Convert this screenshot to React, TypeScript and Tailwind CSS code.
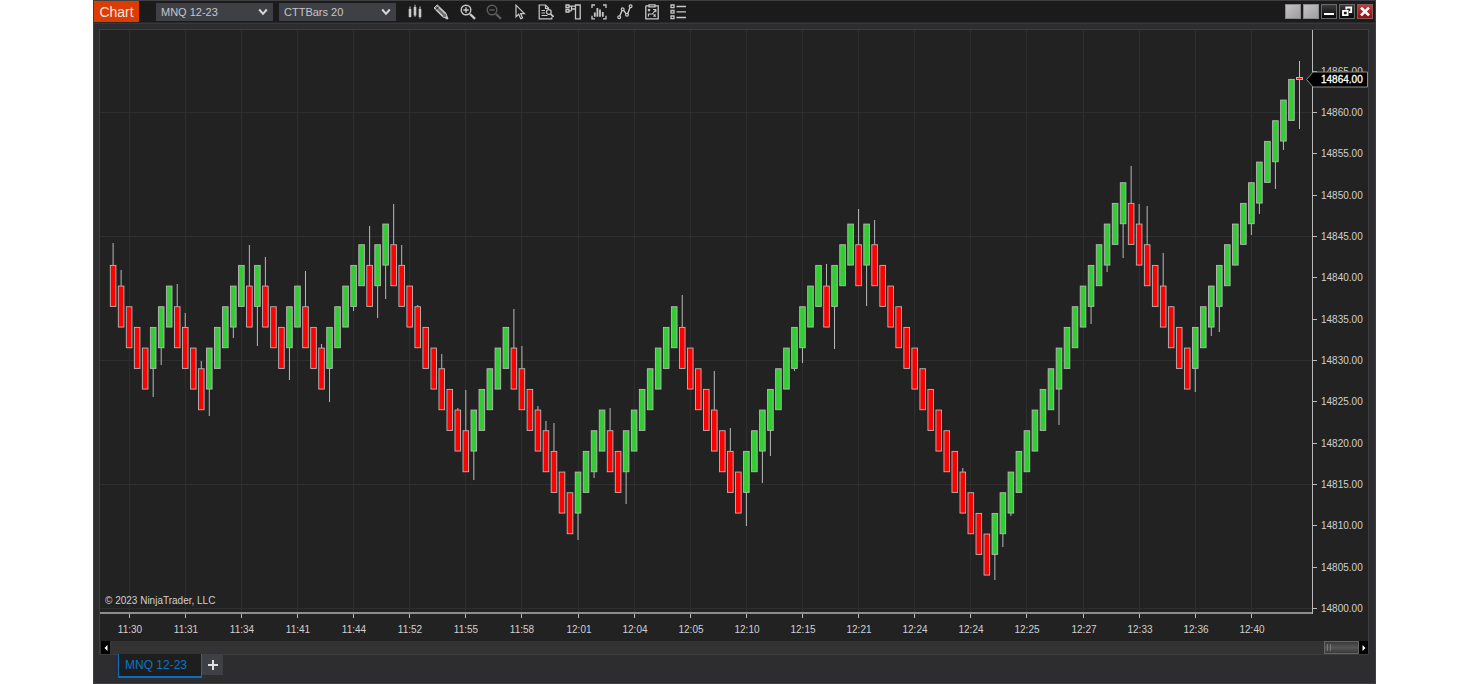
import { ReactNode, useState } from 'react';

type Candle = { up: boolean; level: number; high?: number; low?: number };

// Runs of candles in the same direction: positive is up, negative is down
const RUNS = [
  -5, 3, -4, 5, -1, 1, -3, 2, -3, 5, -1, 2, -10, 5, -8, 4, -2, 7, -8, 10, -1, 3, -1, 1, -15, 17, -8, 13,
];

// Wick ends by candle index
const HIGHS: Record<number, number> = {
  0: 213, 1: 240, 8: 254, 9: 283, 11: 331, 17: 215, 19: 227, 24: 241, 26: 314, 32: 196, 35: 174, 36: 215,
  38: 275, 41: 324, 43: 378, 44: 360, 50: 279, 51: 316, 53: 376, 54: 391, 55: 393, 62: 378, 71: 265, 75: 341,
  77: 398, 89: 234, 93: 179, 95: 190, 106: 438, 127: 136, 128: 174, 129: 176, 131: 223,
};
const LOWS: Record<number, number> = {
  5: 367, 6: 335, 12: 386, 15: 308, 18: 316, 22: 350, 27: 372, 30: 281, 33: 288, 34: 269, 45: 450, 58: 510,
  60: 448, 64: 474, 79: 496, 81: 453, 82: 426, 85: 341, 86: 333, 90: 319, 94: 276, 110: 550, 111: 517,
  112: 486, 118: 395, 122: 294, 124: 242, 126: 228, 135: 362, 137: 306, 138: 302, 142: 205, 143: 184,
  145: 159, 146: 120,
};

const TIMES = [
  '11:30', '11:31', '11:34', '11:41', '11:44', '11:52', '11:55', '11:58', '12:01', '12:04', '12:05',
  '12:10', '12:15', '12:21', '12:24', '12:24', '12:25', '12:27', '12:33', '12:36', '12:40',
];
const PRICES = Array.from({ length: 14 }, (_, i) => 14865 - i * 5);

const candleX = (i: number) => 13.1 + i * 8.016;
const priceY = (p: number) => 82.5 + (14860 - p) * 8.267;
const STEP = 20.667;

function buildCandles(): Candle[] {
  const out: Candle[] = [];
  let level = 1;
  for (const run of RUNS) {
    for (let n = 0; n < Math.abs(run); n++) {
      level += run > 0 ? 1 : -1;
      const i = out.length;
      out.push({ up: run > 0, level, high: HIGHS[i], low: LOWS[i] });
    }
  }
  return out;
}

const candles = buildCandles();

function PriceChart() {
  return (
    <svg viewBox="0 0 1268 611" className="block h-auto w-full font-['Liberation_Sans',sans-serif] text-[10px]" role="img">
      <g stroke="#2e2e2e" strokeWidth="1">
        {[14860, 14845, 14830, 14815, 14800].map((p) => (
          <line key={p} x1="0" x2="1212" y1={Math.floor(priceY(p)) + 0.5} y2={Math.floor(priceY(p)) + 0.5} />
        ))}
        {TIMES.map((_, i) => {
          const x = Math.floor(candleX(2 + i * 7)) + 0.5;
          return <line key={i} x1={x} x2={x} y1="0" y2="583" />;
        })}
      </g>

      <g stroke="#b8b8b8">
        {candles.map((c, i) => {
          const x = candleX(i);
          const top = 235.4 - c.level * STEP;
          return (
            <g key={i}>
              {c.high !== undefined && <line x1={x} x2={x} y1={c.high} y2={top} />}
              {c.low !== undefined && <line x1={x} x2={x} y1={top + 41} y2={c.low} />}
              <rect x={x - 2.8} y={top} width="5.6" height="41" fill={c.up ? '#32cd32' : '#ff0000'} strokeWidth="0.9" />
            </g>
          );
        })}
        <line x1="1199.5" x2="1199.5" y1="31" y2="99" />
        <rect x="1196.5" y="47.5" width="6" height="2" fill="#ff0000" />
      </g>

      <line x1="0" x2="1213" y1="583" y2="583" stroke="#8c8e8c" strokeWidth="2" />
      <line x1="1212.5" x2="1212.5" y1="0" y2="584" stroke="#b9b9b9" />

      <g fill="#d0d0d0">
        {TIMES.map((t, i) => {
          const x = Math.floor(candleX(2 + i * 7)) + 0.5;
          return (
            <g key={i}>
              <line x1={x} x2={x} y1="584" y2="588" stroke="#b9b9b9" />
              <text x={x + 0.5} y="603" textAnchor="middle">{t}</text>
            </g>
          );
        })}
        {PRICES.map((p) => {
          const y = Math.floor(priceY(p)) + 0.5;
          return (
            <g key={p}>
              <line x1="1213" x2="1217" y1={y} y2={y} stroke="#b9b9b9" />
              <text x="1221" y={y + 3.5}>{p.toFixed(2)}</text>
            </g>
          );
        })}
        <text x="5" y="574">© 2023 NinjaTrader, LLC</text>
      </g>

      <polygon points="1206.5,49.5 1213,42 1267.5,42 1267.5,57 1213,57" fill="#000" stroke="#8a8a8a" />
      <text x="1221" y="53" fill="#fff" stroke="#fff" strokeWidth="0.3">14864.00</text>
    </svg>
  );
}

function Picker({ label, value, options }: { label: string; value: string; options: string[] }) {
  const [selected, setSelected] = useState(value);
  return (
    <label className="relative flex h-[18px] w-[117px] items-center bg-[#3f3f46]">
      <select
        aria-label={label}
        value={selected}
        onChange={(e) => setSelected(e.target.value)}
        className="h-full w-full appearance-none bg-transparent pl-[5px] text-[11px] leading-[18px] text-[#c6c6c8] outline-none"
      >
        {options.map((o) => (
          <option key={o}>{o}</option>
        ))}
      </select>
      <svg viewBox="0 0 10 8" className="pointer-events-none absolute right-[5px] h-2 w-[10px]" fill="none" stroke="#d8d8d8" strokeWidth="2">
        <path d="M1.2 1.5 5 5.8 8.8 1.5" />
      </svg>
    </label>
  );
}

const TOOLS: { name: string; dim?: boolean; icon: ReactNode }[] = [
  {
    name: 'Chart style',
    icon: (
      <>
        <path d="M3 2.5v11M8 .8v12M13 2.5v12" />
        <path d="M3 5v8M8 3v8.5M13 5v8" strokeWidth="2.6" />
      </>
    ),
  },
  {
    name: 'Drawing tools',
    icon: (
      <>
        <path d="M1 4 4.2.9 13 9.4 15 15 9.6 12.8Z" fill="#6e6e6e" />
        <path d="M1.8 4.4 9.8 12.2M4.4 1.8 12.6 9.8" strokeWidth="1.4" />
        <path d="m2.8 5.6 3-3" stroke="#1b1b1c" />
        <path d="m12.6 12.8 2 2" strokeWidth="2" />
      </>
    ),
  },
  {
    name: 'Zoom in',
    icon: (
      <>
        <circle cx="6" cy="6" r="4.8" strokeWidth="1.4" />
        <path d="M6 3.3v5.4M3.3 6h5.4" strokeWidth="1.4" />
        <path d="m10 10 5 4.8" strokeWidth="2.4" />
      </>
    ),
  },
  {
    name: 'Zoom out',
    dim: true,
    icon: (
      <>
        <circle cx="6" cy="6" r="4.8" strokeWidth="1.4" />
        <path d="M3.3 6h5.4" strokeWidth="1.4" />
        <path d="m10 10 5 4.8" strokeWidth="2.4" />
      </>
    ),
  },
  { name: 'Cursor', icon: <path d="M4 1.2v11.6l2.7-2.5 2 4.5 1.9-.9-2-4.3h3.8Z" strokeWidth="1.2" /> },
  {
    name: 'Data box',
    icon: (
      <>
        <path d="M11 4.5 7.5 1H1.2v13.8h12.6v-1.6M7.5 1v3.5H11" strokeWidth="1.2" />
        <path d="M3.5 6.5h3.5M3.5 9h3.5M3.5 11.5h6" />
        <circle cx="10.8" cy="8" r="2.4" strokeWidth="1.2" />
        <path d="m12.5 9.8 3 3" strokeWidth="1.7" />
      </>
    ),
  },
  {
    name: 'Chart trader',
    icon: (
      <>
        <path d="M10.5 1h4.7v13.8h-4.7zM4 2.2h6.5M4 6.8h2.5M6.5 2.2v4.6M6.5 5h4" strokeWidth="1.3" />
        <path d="M1 1h3v2.5H1zM1 5.5h3V8H1z" strokeWidth="1.3" />
      </>
    ),
  },
  {
    name: 'Data series',
    icon: (
      <>
        <path d="M1 4V1h3M12 1h3v3M15 11.8v3h-3M4 14.8H1v-3" strokeWidth="1.3" />
        <path d="M3.8 12.8V8.5M6.4 12.8V4M9 12.8V5.5M11.8 12.8V8" strokeWidth="1.8" />
      </>
    ),
  },
  {
    name: 'Indicators',
    icon: (
      <>
        <path d="M2.8 12 5 6.5M6.7 6.3l2.5 3.5M10.8 9.5 13 3.6" strokeWidth="1.4" />
        <circle cx="2.2" cy="13.2" r="1.4" strokeWidth="1.2" />
        <circle cx="5.7" cy="5.3" r="1.4" strokeWidth="1.2" />
        <circle cx="10" cy="10.7" r="1.4" strokeWidth="1.2" />
        <circle cx="13.6" cy="2.2" r="1.4" strokeWidth="1.2" />
      </>
    ),
  },
  {
    name: 'Strategies',
    icon: (
      <>
        <path d="M1.8 1.8h2.7M11.5 1.8h2.7v13H1.8v-13M5 .8h6v2H5z" strokeWidth="1.3" />
        <path d="m4 5.2 2 2m0-2-2 2M9.5 10.5l2.2 2.2m0-2.2-2.2 2.2M4.5 12.5V10h4L11.5 6M9 5.5h2.8v2.8" strokeWidth="1.2" />
      </>
    ),
  },
  {
    name: 'Properties',
    icon: (
      <>
        <path d="M1 1h3v2.6H1zM1 6.5h3v2.6H1zM1 12h3v2.6H1z" strokeWidth="1.3" />
        <path d="M6.5 2.5h9.5M6.5 7.8h9.5M6.5 13.5h9.5" strokeWidth="1.3" />
      </>
    ),
  },
];

function Toolbar() {
  return (
    <div className="ml-[11px] flex w-[279px] items-center justify-between">
      {TOOLS.map((t) => (
        <button key={t.name} type="button" aria-label={t.name} className={t.dim ? 'text-[#5c5c5c]' : 'text-[#c8c8c8]'}>
          <svg viewBox="0 0 16 16" className="block h-4 w-4" fill="none" stroke="currentColor" strokeWidth="1">
            {t.icon}
          </svg>
        </button>
      ))}
    </div>
  );
}

function WindowButtons() {
  const box = 'flex h-[15px] w-4 items-center justify-center border';
  return (
    <div className="ml-auto flex gap-0.5 pr-0.5">
      <button type="button" aria-label="Link instrument" className={`${box} border-[#8b8b8b] bg-linear-to-br from-[#c4c2c4] to-[#a09da0]`} />
      <button type="button" aria-label="Link interval" className={`${box} border-[#8b8b8b] bg-linear-to-br from-[#c4c2c4] to-[#a09da0]`} />
      <button type="button" aria-label="Minimize" className={`${box} border-[#6a6a6a] bg-linear-to-b from-[#3c3c3c] to-[#080808]`}>
        <svg viewBox="0 0 14 13" className="h-[13px] w-[14px]">
          <path d="M2 9h10" stroke="#fff" strokeWidth="2" />
        </svg>
      </button>
      <button type="button" aria-label="Restore" className={`${box} border-[#6a6a6a] bg-linear-to-b from-[#3c3c3c] to-[#080808]`}>
        <svg viewBox="0 0 14 13" className="h-[13px] w-[14px]" fill="none" stroke="#fff" strokeWidth="1.8">
          <path d="M3 5.8h4.6v4.4H3zM6.3 4.5V2.5h4.9v4.7H9" />
        </svg>
      </button>
      <button type="button" aria-label="Close" className={`${box} border-[#8a5a5a] bg-linear-to-b from-[#c23a3e] to-[#8e0f14]`}>
        <svg viewBox="0 0 14 13" className="h-[13px] w-[14px]" stroke="#fff" strokeWidth="2.6">
          <path d="m3 2.6 8 7.8m0-7.8-8 7.8" />
        </svg>
      </button>
    </div>
  );
}

function ScrollBar() {
  return (
    <div className="flex h-[13px] items-stretch bg-[#333333] pl-px">
      <button type="button" aria-label="Scroll left" className="flex w-[9px] items-center justify-center bg-black">
        <svg viewBox="0 0 4 6" className="h-[6px] w-1" fill="#fff"><path d="M3.5 0v6L.5 3z" /></svg>
      </button>
      <div className="ml-auto flex w-[35px] gap-0.5 border border-[#636363] bg-linear-to-b from-[#3a3a3a] via-[#555555] to-[#3a3a3a] py-0.5 pl-0.5">
        <span className="w-px bg-[#777777]" />
        <span className="w-px bg-[#777777]" />
      </div>
      <button type="button" aria-label="Scroll right" className="flex w-[9px] items-center justify-center bg-black">
        <svg viewBox="0 0 4 6" className="h-[6px] w-1" fill="#fff"><path d="M.5 0v6l3-3z" /></svg>
      </button>
    </div>
  );
}

export default function App() {
  return (
    <main className="min-h-screen bg-white font-['Liberation_Sans',sans-serif]">
      <div className="mx-auto flex min-h-screen w-full max-w-[1283px] flex-col border border-[#3f3f43] bg-[#2d2d30]">
        <header className="flex h-[22px] items-center border-b border-[#29292b] bg-[#1b1b1c]">
          <h1 className="flex h-full w-[45px] items-center justify-center bg-[#dd3c00] text-[14px] leading-none text-[#f4e6e0]">Chart</h1>
          <div className="ml-[17px] flex gap-[6px]">
            <Picker label="Instrument" value="MNQ 12-23" options={['MNQ 12-23', 'MES 12-23']} />
            <Picker label="Interval" value="CTTBars 20" options={['CTTBars 20', '1 Minute']} />
          </div>
          <Toolbar />
          <WindowButtons />
        </header>

        <div className="border-t border-[#38383b] pt-[5px] pr-[6px] pl-[5px]">
          <section className="border border-[#3d3d40] bg-[#222222]">
            <PriceChart />
            <ScrollBar />
          </section>
        </div>

        <nav className="-mt-px flex items-start pl-6">
          <button type="button" className="relative h-6 w-[84px] border-x border-b-2 border-[#0b6fbe] bg-[#1e1e1f] pl-[6px] text-left text-[12px] text-[#0b74c8]">
            MNQ 12-23
          </button>
          <button type="button" aria-label="Add tab" className="flex h-[21px] w-[21px] items-center justify-center bg-[#3f3f46]">
            <svg viewBox="0 0 10 10" className="h-[10px] w-[10px]" stroke="#e0e0e0" strokeWidth="2"><path d="M5 0v10M0 5h10" /></svg>
          </button>
        </nav>
      </div>
    </main>
  );
}
